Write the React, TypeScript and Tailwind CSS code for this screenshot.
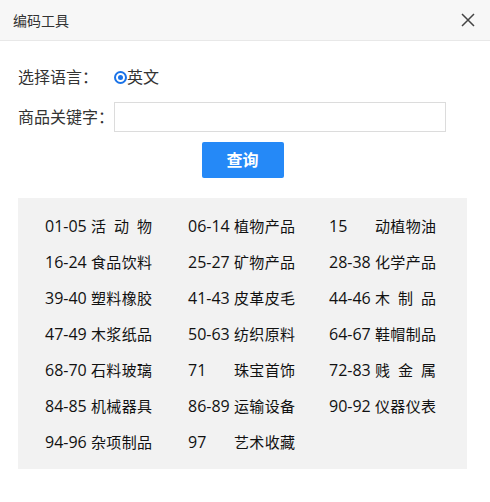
import React from "react";

const items: [string, string][] = [
  ["01-05", "活动物"],
  ["06-14", "植物产品"],
  ["15", "动植物油"],
  ["16-24", "食品饮料"],
  ["25-27", "矿物产品"],
  ["28-38", "化学产品"],
  ["39-40", "塑料橡胶"],
  ["41-43", "皮革皮毛"],
  ["44-46", "木制品"],
  ["47-49", "木浆纸品"],
  ["50-63", "纺织原料"],
  ["64-67", "鞋帽制品"],
  ["68-70", "石料玻璃"],
  ["71", "珠宝首饰"],
  ["72-83", "贱金属"],
  ["84-85", "机械器具"],
  ["86-89", "运输设备"],
  ["90-92", "仪器仪表"],
  ["94-96", "杂项制品"],
  ["97", "艺术收藏"],
];

const App = () => {
  return (
    <div className="w-[490px] h-[502px] bg-white text-[#222] font-['Open_Sans','Noto_Sans_CJK_SC',sans-serif]">
      <div className="h-[41px] flex items-center justify-between pl-[13px] pr-[15px] bg-[#f7f7f7] border-b border-[#e8e8e8]">
        <span className="text-[14px] text-[#333]">编码工具</span>
        <svg width="14" height="14" viewBox="0 0 14 14" className="text-[#444]">
          <path d="M1 1 L13 13 M13 1 L1 13" stroke="currentColor" strokeWidth="1.5" />
        </svg>
      </div>

      <div className="pl-[18px] pr-[23px] pt-[24px]">
        <div className="flex items-center h-6">
          <span className="w-[96px] text-[16px] text-[#333]">选择语言：</span>
          <label className="flex items-center text-[16px] text-[#333]">
            <span className="w-[13px] h-[13px] rounded-full border-2 border-[#1a73e8] flex items-center justify-center">
              <span className="w-[5px] h-[5px] rounded-full bg-[#1a73e8]" />
            </span>
            <span>英文</span>
          </label>
        </div>

        <div className="flex items-center mt-[13px]">
          <span className="w-[96px] text-[16px] text-[#333]">商品关键字：</span>
          <input className="w-[332px] h-[30px] border border-[#dcdcdc] outline-none px-2 text-[14px]" />
        </div>

        <div className="flex justify-center mt-[10px]">
          <button className="w-[82px] h-[36px] rounded-[2px] bg-[#2589f7] text-white text-[16px] font-bold">
            查询
          </button>
        </div>

        <div className="mt-[20px] h-[271px] bg-[#f2f2f2] pl-[27px] pt-[10px]">
          <div className="grid grid-cols-[143px_141px_auto]">
            {items.map(([code, name]) => (
              <div key={code} className="flex items-center h-9 text-[15px] text-[#111]">
                <span className="w-[46px] text-[16px]">{code}</span>
                <span className="w-[61px] flex justify-between">
                  {name.split("").map((c, i) => (
                    <span key={i}>{c}</span>
                  ))}
                </span>
              </div>
            ))}
          </div>
        </div>
      </div>
    </div>
  );
};

export default App;
